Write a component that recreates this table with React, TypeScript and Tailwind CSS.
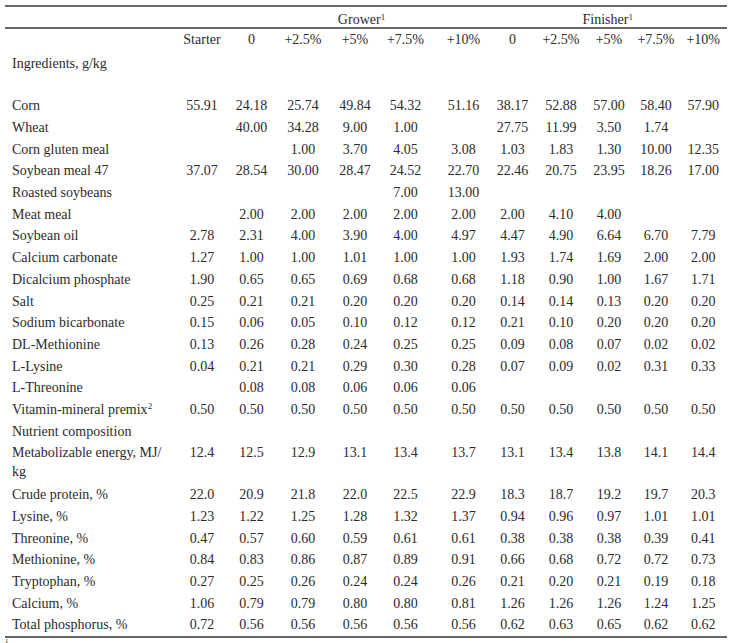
import React from 'react';

// grid template shared by every row of the table
const COLS = 'grid grid-cols-[172.5px_49px_50px_53px_51px_50px_58px_48px_49px_47px_47px_47.5px]';

const HEADS = ['Starter', '0', '+2.5%', '+5%', '+7.5%', '+10%', '0', '+2.5%', '+5%', '+7.5%', '+10%'];

// extra left padding for the grower +10% column, its text sits a bit right of center
const PAD = ['', '', '', '', '', 'pl-2', '', '', '', '', ''];

type Row = { label: React.ReactNode; values: string[]; tall?: boolean };

const ingredients: Row[] = [
  { label: 'Corn', values: ['55.91', '24.18', '25.74', '49.84', '54.32', '51.16', '38.17', '52.88', '57.00', '58.40', '57.90'] },
  { label: 'Wheat', values: ['', '40.00', '34.28', '9.00', '1.00', '', '27.75', '11.99', '3.50', '1.74', ''] },
  { label: 'Corn gluten meal', values: ['', '', '1.00', '3.70', '4.05', '3.08', '1.03', '1.83', '1.30', '10.00', '12.35'] },
  { label: 'Soybean meal 47', values: ['37.07', '28.54', '30.00', '28.47', '24.52', '22.70', '22.46', '20.75', '23.95', '18.26', '17.00'] },
  { label: 'Roasted soybeans', values: ['', '', '', '', '7.00', '13.00', '', '', '', '', ''] },
  { label: 'Meat meal', values: ['', '2.00', '2.00', '2.00', '2.00', '2.00', '2.00', '4.10', '4.00', '', ''] },
  { label: 'Soybean oil', values: ['2.78', '2.31', '4.00', '3.90', '4.00', '4.97', '4.47', '4.90', '6.64', '6.70', '7.79'] },
  { label: 'Calcium carbonate', values: ['1.27', '1.00', '1.00', '1.01', '1.00', '1.00', '1.93', '1.74', '1.69', '2.00', '2.00'] },
  { label: 'Dicalcium phosphate', values: ['1.90', '0.65', '0.65', '0.69', '0.68', '0.68', '1.18', '0.90', '1.00', '1.67', '1.71'] },
  { label: 'Salt', values: ['0.25', '0.21', '0.21', '0.20', '0.20', '0.20', '0.14', '0.14', '0.13', '0.20', '0.20'] },
  { label: 'Sodium bicarbonate', values: ['0.15', '0.06', '0.05', '0.10', '0.12', '0.12', '0.21', '0.10', '0.20', '0.20', '0.20'] },
  { label: 'DL-Methionine', values: ['0.13', '0.26', '0.28', '0.24', '0.25', '0.25', '0.09', '0.08', '0.07', '0.02', '0.02'] },
  { label: 'L-Lysine', values: ['0.04', '0.21', '0.21', '0.29', '0.30', '0.28', '0.07', '0.09', '0.02', '0.31', '0.33'] },
  { label: 'L-Threonine', values: ['', '0.08', '0.08', '0.06', '0.06', '0.06', '', '', '', '', ''] },
  {
    label: (
      <>
        Vitamin-mineral premix<sup className="text-[9px]">2</sup>
      </>
    ),
    values: Array(11).fill('0.50'),
  },
];

const nutrients: Row[] = [
  {
    label: (
      <>
        Metabolizable energy, MJ/
        <br />
        kg
      </>
    ),
    values: ['12.4', '12.5', '12.9', '13.1', '13.4', '13.7', '13.1', '13.4', '13.8', '14.1', '14.4'],
    tall: true,
  },
  { label: 'Crude protein, %', values: ['22.0', '20.9', '21.8', '22.0', '22.5', '22.9', '18.3', '18.7', '19.2', '19.7', '20.3'] },
  { label: 'Lysine, %', values: ['1.23', '1.22', '1.25', '1.28', '1.32', '1.37', '0.94', '0.96', '0.97', '1.01', '1.01'] },
  { label: 'Threonine, %', values: ['0.47', '0.57', '0.60', '0.59', '0.61', '0.61', '0.38', '0.38', '0.38', '0.39', '0.41'] },
  { label: 'Methionine, %', values: ['0.84', '0.83', '0.86', '0.87', '0.89', '0.91', '0.66', '0.68', '0.72', '0.72', '0.73'] },
  { label: 'Tryptophan, %', values: ['0.27', '0.25', '0.26', '0.24', '0.24', '0.26', '0.21', '0.20', '0.21', '0.19', '0.18'] },
  { label: 'Calcium, %', values: ['1.06', '0.79', '0.79', '0.80', '0.80', '0.81', '1.26', '1.26', '1.26', '1.24', '1.25'] },
  { label: 'Total phosphorus, %', values: ['0.72', '0.56', '0.56', '0.56', '0.56', '0.56', '0.62', '0.63', '0.65', '0.62', '0.62'] },
];

function DataRow({ row }: { row: Row }) {
  if (row.tall) {
    return (
      <div className={`${COLS} h-[42px] items-start pt-[1px] leading-[19px]`}>
        <div className="pl-[7px]">{row.label}</div>
        {row.values.map((v, i) => (
          <div key={i} className={`text-center ${PAD[i]}`}>
            {v}
          </div>
        ))}
      </div>
    );
  }
  return (
    <div className={`${COLS} h-[21.7px] items-center`}>
      <div className="pl-[7px] whitespace-nowrap">{row.label}</div>
      {row.values.map((v, i) => (
        <div key={i} className={`text-center ${PAD[i]}`}>
          {v}
        </div>
      ))}
    </div>
  );
}

export default function App() {
  return (
    <div className="min-h-screen bg-white pt-[5px] font-['Liberation_Serif','Times_New_Roman',serif] text-[14px] text-[#2b2b2b]">
      <div className="ml-[5px] w-[722px]">
        <div className="h-[2px] bg-[#666]" />

        {/* group header */}
        <div className={`${COLS} h-[20px] items-center pt-[2px]`}>
          <div className="col-span-2" />
          <div className="col-span-5 pl-2 text-center">
            Grower<sup className="text-[9px]">1</sup>
          </div>
          <div className="col-span-5 text-center">
            Finisher<sup className="text-[9px]">1</sup>
          </div>
        </div>
        <div className="h-[2px] bg-[#666]" />

        {/* column header */}
        <div className={`${COLS} h-[21px] items-center`}>
          <div />
          {HEADS.map((h, i) => (
            <div key={i} className={`text-center ${PAD[i]}`}>
              {h}
            </div>
          ))}
        </div>

        <div className="flex h-[26px] items-center pl-[7px]">Ingredients, g/kg</div>
        <div className="h-[19px]" />

        {ingredients.map((r, i) => (
          <DataRow key={i} row={r} />
        ))}

        <div className="flex h-[21.7px] items-center pl-[7px]">Nutrient composition</div>

        {nutrients.map((r, i) => (
          <DataRow key={i} row={r} />
        ))}

        <div className="h-[2px] bg-[#666]" />
        <div className="pl-[0px] text-[9px] leading-[12px]">
          <sup>1</sup>
        </div>
      </div>
    </div>
  );
}
